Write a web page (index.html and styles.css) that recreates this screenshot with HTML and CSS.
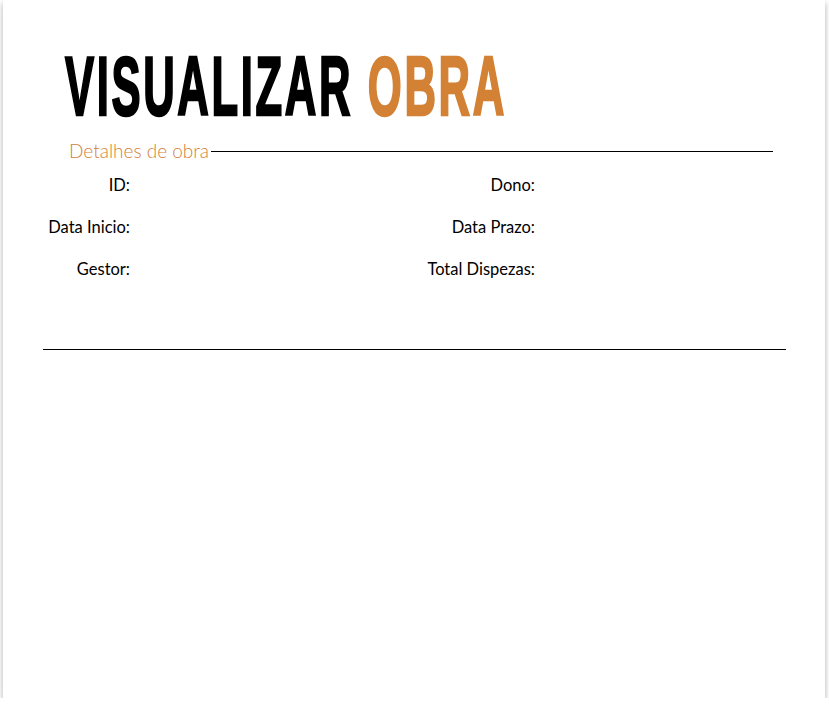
FILE: index.html
```html
<!DOCTYPE html>
<html lang="pt">
<head>
<meta charset="utf-8">
<title>Visualizar Obra</title>
<link rel="stylesheet" href="styles.css">
</head>
<body>
<div class="card">
  <h1 class="title"><span class="title-inner">VISUALIZAR <span class="accent">OBRA</span></span></h1>
  <div class="section-head">
    <span class="section-label">Detalhes de obra</span>
    <span class="section-rule"></span>
  </div>
  <div class="fields">
    <div class="label">ID:</div><div class="value"></div>
    <div class="label">Dono:</div><div class="value"></div>
    <div class="label">Data Inicio:</div><div class="value"></div>
    <div class="label">Data Prazo:</div><div class="value"></div>
    <div class="label">Gestor:</div><div class="value"></div>
    <div class="label">Total Dispezas:</div><div class="value"></div>
  </div>
  <hr class="divider">
</div>
</body>
</html>
```

FILE: styles.css
```css
html, body {
  margin: 0;
  padding: 0;
  background: #ffffff;
}
.card {
  margin: 0 4px 0 3px;
  height: 698px;
  background: #ffffff;
  box-shadow: 0 3px 6px rgba(0, 0, 0, 0.32);
  box-sizing: border-box;
  padding-top: 44px;
  overflow: hidden;
}
.title {
  margin: 0 0 0 62px;
  font-family: "Liberation Sans Narrow", "Liberation Sans", sans-serif;
  font-weight: 700;
  font-size: 84px;
  line-height: 84px;
  height: 84px;
  color: #000;
}
.title-inner {
  display: inline-block;
  transform: scaleX(0.52);
  transform-origin: left center;
  white-space: nowrap;
  -webkit-text-stroke: 2.5px currentColor;
  letter-spacing: 5px;
}
.accent {
  color: #D38134;
}
.section-head {
  display: flex;
  align-items: center;
  margin: 10px 52px 0 66px;
  height: 24px;
}
.section-label {
  font-family: "Lato", "Open Sans", sans-serif;
  font-weight: 300;
  font-size: 19px;
  color: #D4803A;
  white-space: nowrap;
}
.section-rule {
  flex: 1;
  height: 1px;
  background: #000;
  margin-left: 2px;
  margin-top: 2px;
}
.fields {
  display: grid;
  grid-template-columns: 127px 278px 127px 1fr;
  grid-auto-rows: 42px;
  margin-top: 13px;
  font-family: "Lato", "Open Sans", sans-serif;
  font-weight: 400;
  font-size: 16.5px;
  color: #000;
}
.label {
  text-align: right;
  white-space: nowrap;
  line-height: 20px;
}
.divider {
  margin: 48px 39px 0 40px;
  border: 0;
  height: 1px;
  background: #000;
}
```
